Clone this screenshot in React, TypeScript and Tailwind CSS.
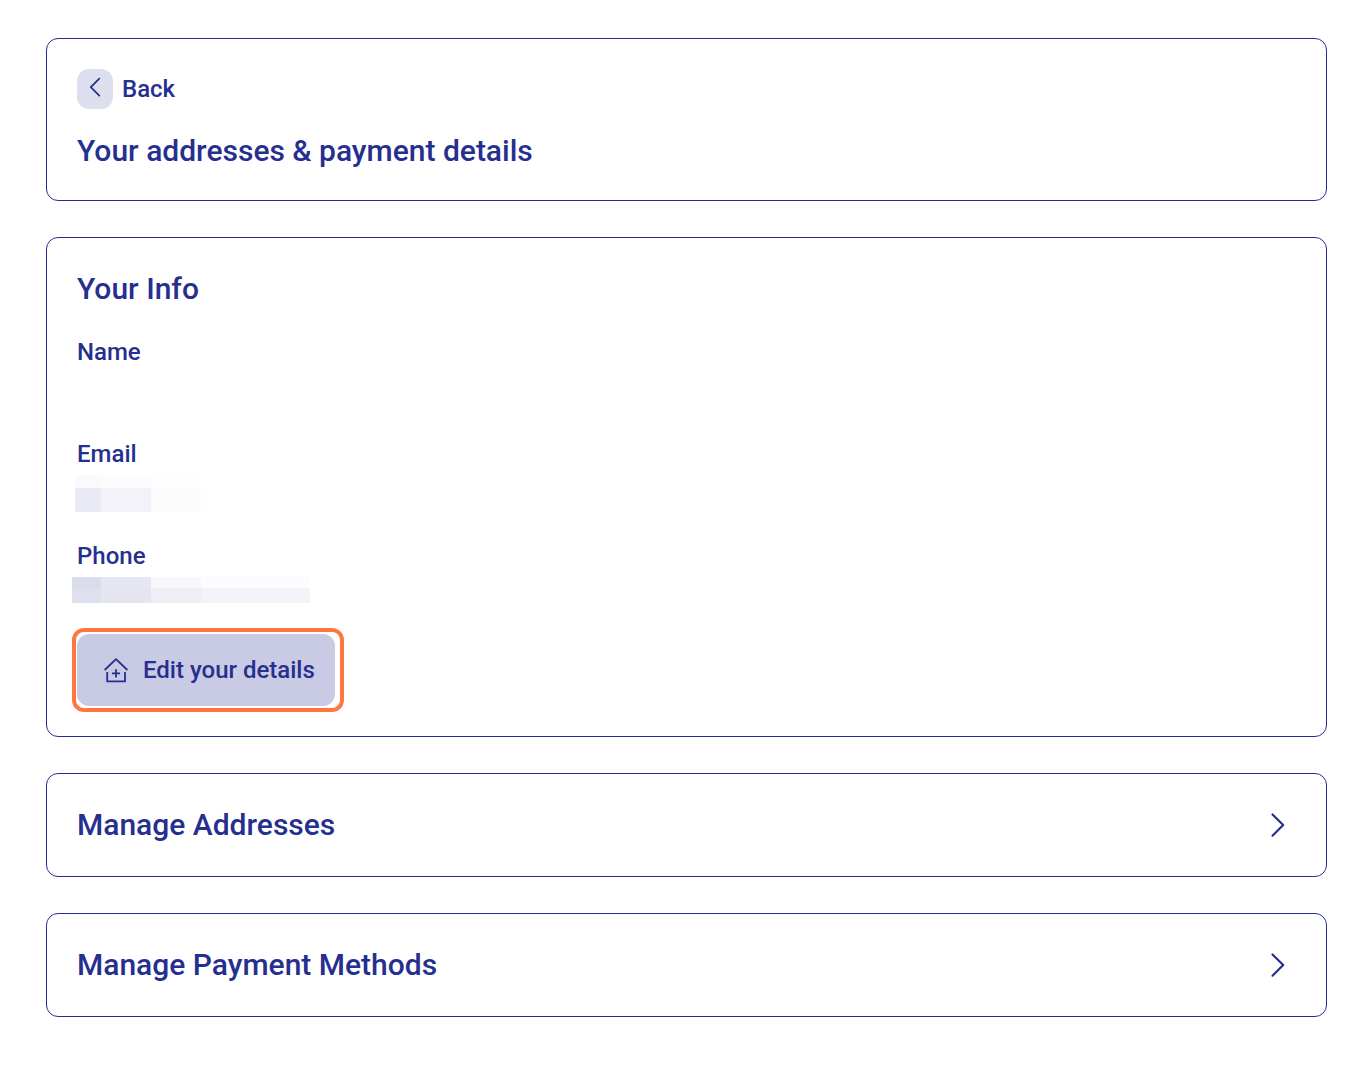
import type { ReactNode } from "react";

const cardClass = "rounded-xl border border-[#262f8f] bg-white px-[30px]";

const headingClass = "text-[30px] font-medium leading-[42px]";

// [x, y, width, height, fill]
type Block = [number, number, number, number, string];

const emailBlocks: Block[] = [
  [0, 0, 26, 13, "#fafafd"],
  [26, 0, 50, 13, "#fcfcfe"],
  [76, 0, 50, 13, "#fefefe"],
  [0, 13, 26, 24, "#eaeaf5"],
  [26, 13, 50, 24, "#f2f2f8"],
  [76, 13, 50, 24, "#fcfcfd"],
];

const phoneBlocks: Block[] = [
  [0, 0, 29, 11, "#dadcea"],
  [29, 0, 50, 11, "#e6e6f2"],
  [79, 0, 50, 11, "#f7f7fc"],
  [129, 0, 109, 11, "#fcfcfe"],
  [0, 11, 29, 15, "#dfe0ee"],
  [29, 11, 50, 15, "#e5e5f1"],
  [79, 11, 50, 15, "#eeeef7"],
  [129, 11, 109, 15, "#f3f3f9"],
];

const MaskedValue = ({
  blocks,
  width,
  height,
  className,
}: {
  blocks: Block[];
  width: number;
  height: number;
  className: string;
}) => (
  <svg
    width={width}
    height={height}
    className={className}
    shapeRendering="crispEdges"
    aria-hidden="true"
  >
    {blocks.map(([x, y, w, h, fill]) => (
      <rect key={`${x}-${y}`} x={x} y={y} width={w} height={h} fill={fill} />
    ))}
  </svg>
);

const Field = ({ label, children }: { label: string; children?: ReactNode }) => (
  <div>
    <dt className="text-2xl font-medium leading-[34px]">{label}</dt>
    <dd className="h-[34px] pt-1">{children}</dd>
  </div>
);

const HomePlusIcon = () => (
  <svg
    width="24"
    height="26"
    viewBox="0 0 24 26"
    fill="none"
    stroke="currentColor"
    strokeWidth="1.8"
    aria-hidden="true"
  >
    <path d="M0.6 13 12 2.2 23.4 13" strokeLinejoin="round" />
    <path d="M3.2 15V24.4h17.8V15" />
    <path d="M12 12.2v8.2M7.9 16.3h8.2" />
  </svg>
);

const ManageRow = ({ title, href }: { title: string; href: string }) => (
  <a href={href} className={`${cardClass} flex items-center justify-between py-[30px]`}>
    <h2 className={headingClass}>{title}</h2>
    <svg
      width="36"
      height="36"
      viewBox="0 0 36 36"
      fill="none"
      stroke="currentColor"
      strokeWidth="2.2"
      strokeLinecap="round"
      strokeLinejoin="round"
      aria-hidden="true"
    >
      <path d="M12.5 7.5 23.2 18 12.5 28.7" />
    </svg>
  </a>
);

const App = () => {
  return (
    <main className="flex flex-col gap-9 bg-white pt-[38px] pr-[30px] pb-[74px] pl-[46px] font-['Roboto',sans-serif] text-[#262f8f]">
      {/* HEADER */}
      <header className={`${cardClass} flex flex-col items-start gap-[21px] pt-[30px] pb-7`}>
        <a href="#account" className="flex items-center gap-[9px] text-2xl font-medium">
          <span className="flex h-10 w-9 items-center justify-center rounded-xl bg-[#dedfee]">
            <svg
              width="36"
              height="40"
              viewBox="0 0 36 40"
              fill="none"
              stroke="currentColor"
              strokeWidth="1.8"
              strokeLinecap="round"
              strokeLinejoin="round"
              aria-hidden="true"
            >
              <path d="M22.3 9.6 13.8 18.1l8.5 8.5" />
            </svg>
          </span>
          Back
        </a>
        <h1 className={headingClass}>Your addresses &amp; payment details</h1>
      </header>

      {/* YOUR INFO */}
      <section className={`${cardClass} py-[30px]`}>
        <h2 className={headingClass}>Your Info</h2>

        <dl className="mt-[25px] flex flex-col gap-[34px]">
          <Field label="Name" />
          <Field label="Email">
            <MaskedValue blocks={emailBlocks} width={126} height={37} className="-ml-0.5" />
          </Field>
          <Field label="Phone">
            <MaskedValue blocks={phoneBlocks} width={238} height={26} className="-ml-[5px]" />
          </Field>
        </dl>

        <div className="relative mt-[27px] w-fit">
          <button
            type="button"
            className="flex h-[72px] items-center gap-[15px] rounded-xl bg-[#c9cae4] pr-5 pl-[27px] text-2xl font-medium"
          >
            <HomePlusIcon />
            Edit your details
          </button>
          <span className="pointer-events-none absolute -inset-y-1.5 -right-[9px] -left-[5px] rounded-xl border-4 border-[#ff7640]" />
        </div>
      </section>

      <ManageRow title="Manage Addresses" href="#addresses" />
      <ManageRow title="Manage Payment Methods" href="#payment-methods" />
    </main>
  );
};

export default App;
